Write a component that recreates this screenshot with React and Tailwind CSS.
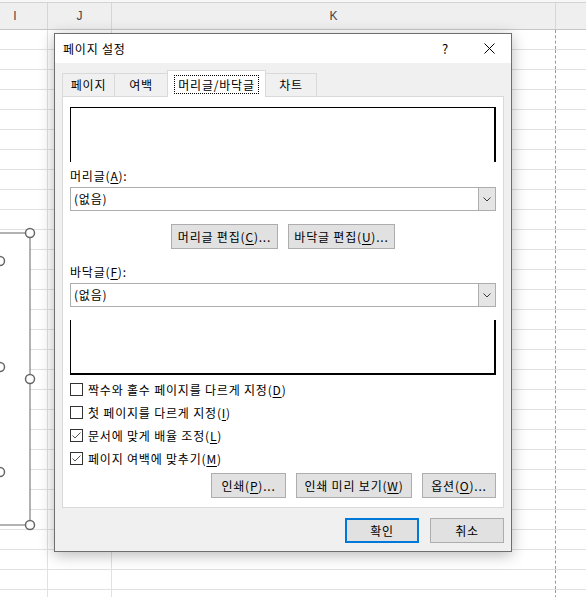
import React from "react";

const font = "font-['Noto_Sans_CJK_KR','Noto_Sans',sans-serif]";

const Mn = ({ pre, hot, post = "" }) => (
  <span>
    {pre}(<span className="underline underline-offset-[2px]">{hot}</span>){post}
  </span>
);

const Btn = ({ w, children, primary }) => (
  <div
    className={`${w} h-[25px] flex items-center justify-center bg-[#e1e1e1] text-[12px] leading-[16px] text-black ${
      primary ? "border-2 border-[#0078d7]" : "border border-[#adadad]"
    }`}
  >
    {children}
  </div>
);

const Combo = () => (
  <div className="h-[24px] flex border border-[#adadad] bg-white">
    <div className="flex-1 flex items-center pl-[3px] text-[12px] leading-[16px]">(없음)</div>
    <div className="w-[17px] flex items-center justify-center bg-[#e5e5e5] border-l border-[#adadad]">
      <svg width="8" height="5" viewBox="0 0 8 5">
        <path d="M0.5 0.5 L4 4 L7.5 0.5" fill="none" stroke="#3c3c3c" strokeWidth="1" />
      </svg>
    </div>
  </div>
);

const CheckRow = ({ checked, children }) => (
  <div className="h-[23px] flex items-center gap-[5px]">
    <div className="w-[13px] h-[13px] border border-[#333333] bg-white flex items-center justify-center">
      {checked && (
        <svg width="11" height="11" viewBox="0 0 11 11">
          <path d="M1.5 5.5 L4 8 L9.5 2.5" fill="none" stroke="#555555" strokeWidth="1" />
        </svg>
      )}
    </div>
    <span className="text-[12px] leading-[16px]">{children}</span>
  </div>
);

const rows = Array.from({ length: 29 });

export default function App() {
  return (
    <div className={`relative w-[586px] h-[597px] overflow-hidden bg-white text-black ${font}`}>
      {/* sheet */}
      <div className="h-[3px] bg-[#f7f7f7] border-b border-[#d4d4d4]" />
      <div className="h-[27px] flex bg-[#efefef] border-b border-[#c6c6c6] text-[12px] text-[#444444] font-['Liberation_Sans',sans-serif]">
        <div className="ml-[-17px] w-[65px] shrink-0 flex items-center justify-center border-r border-[#d6d6d6]">I</div>
        <div className="w-[64px] shrink-0 flex items-center justify-center border-r border-[#d6d6d6]">J</div>
        <div className="w-[444px] shrink-0 flex items-center justify-center border-r border-[#d6d6d6]">K</div>
        <div className="flex-1" />
      </div>
      {rows.map((_, i) => (
        <div key={i} className="h-[20px] flex border-b border-[#e1e1e1]">
          <div className="w-[48px] shrink-0 border-r border-[#e1e1e1]" />
          <div className="w-[64px] shrink-0 border-r border-[#e1e1e1]" />
          <div className="w-[444px] shrink-0 border-r border-dashed border-r-[#9a9a9a]" />
          <div className="flex-1" />
        </div>
      ))}

      {/* selected shape */}
      <svg className="absolute left-0 top-0" width="40" height="597">
        <rect x="-10" y="233" width="40" height="292" fill="#ffffff" stroke="#666666" strokeWidth="1" />
        {[233, 379, 525].map((y) => (
          <circle key={y} cx="30" cy={y} r="4.5" fill="#ffffff" stroke="#666666" strokeWidth="1.5" />
        ))}
        {[261, 367, 472].map((y) => (
          <circle key={y} cx="0" cy={y} r="4.5" fill="#ffffff" stroke="#666666" strokeWidth="1.5" />
        ))}
      </svg>

      {/* dialog */}
      <div className="absolute left-[54px] top-[33px] w-[458px] h-[519px] border border-[#6e6e6e] bg-[#f0f0f0] shadow-[0_3px_14px_rgba(0,0,0,0.28)] flex flex-col tracking-[0.8px]">
        <div className="h-[29px] bg-white flex items-center pl-[8px] pr-[16px] text-[12px]">
          <span className="flex-1">페이지 설정</span>
          <span className="text-[13px] mr-[35px]">?</span>
          <svg width="11" height="11" viewBox="0 0 11 11">
            <path d="M0.5 0.5 L10.5 10.5 M10.5 0.5 L0.5 10.5" stroke="#000000" strokeWidth="1" />
          </svg>
        </div>

        <div className="px-[7px] pt-[7px] flex flex-col">
          {/* tabs */}
          <div className="h-[26px] flex items-end text-[12px] leading-[16px]">
            <div className="w-[52px] h-[23px] flex items-center justify-center border-l border-t border-[#d9d9d9]">페이지</div>
            <div className="w-[53px] h-[23px] flex items-center justify-center border-l border-t border-[#d9d9d9]">여백</div>
            <div className="relative z-10 w-[99px] h-[27px] -mb-px flex items-center justify-center bg-white border-l border-t border-r border-[#d9d9d9]">
              <span className="px-[3px] border border-dotted border-black leading-[17px]">머리글/바닥글</span>
            </div>
            <div className="w-[51px] h-[23px] flex items-center justify-center border-t border-r border-[#d9d9d9]">차트</div>
          </div>

          {/* panel */}
          <div className="h-[412px] bg-white border border-[#d9d9d9] px-[7px] flex flex-col">
            <div className="mt-[10px] h-[55px] border-t border-l border-r-2 border-black" />
            <div className="mt-[6px] text-[12px] leading-[16px]">
              <Mn pre="머리글" hot="A" post=":" />
            </div>
            <div className="mt-[3px]">
              <Combo />
            </div>
            <div className="mt-[13px] flex justify-center gap-[10px]">
              <Btn w="w-[107px]">
                <Mn pre="머리글 편집" hot="C" post="..." />
              </Btn>
              <Btn w="w-[107px]">
                <Mn pre="바닥글 편집" hot="U" post="..." />
              </Btn>
            </div>
            <div className="mt-[15px] text-[12px] leading-[16px]">
              <Mn pre="바닥글" hot="F" post=":" />
            </div>
            <div className="mt-[3px]">
              <Combo />
            </div>
            <div className="mt-[13px] h-[55px] border-l border-r-2 border-b-2 border-black" />
            <div className="mt-[3px] flex flex-col">
              <CheckRow>
                <Mn pre="짝수와 홀수 페이지를 다르게 지정" hot="D" />
              </CheckRow>
              <CheckRow>
                <Mn pre="첫 페이지를 다르게 지정" hot="I" />
              </CheckRow>
              <CheckRow checked>
                <Mn pre="문서에 맞게 배율 조정" hot="L" />
              </CheckRow>
              <CheckRow checked>
                <Mn pre="페이지 여백에 맞추기" hot="M" />
              </CheckRow>
            </div>
            <div className="mt-[3px] flex justify-end gap-[10px]">
              <Btn w="w-[75px]">
                <Mn pre="인쇄" hot="P" post="..." />
              </Btn>
              <Btn w="w-[116px]">
                <Mn pre="인쇄 미리 보기" hot="W" />
              </Btn>
              <Btn w="w-[74px]">
                <Mn pre="옵션" hot="O" post="..." />
              </Btn>
            </div>
          </div>

          <div className="mt-[10px] flex justify-end gap-[11px]">
            <Btn w="w-[74px]" primary>확인</Btn>
            <Btn w="w-[74px]">취소</Btn>
          </div>
        </div>
      </div>
    </div>
  );
}
